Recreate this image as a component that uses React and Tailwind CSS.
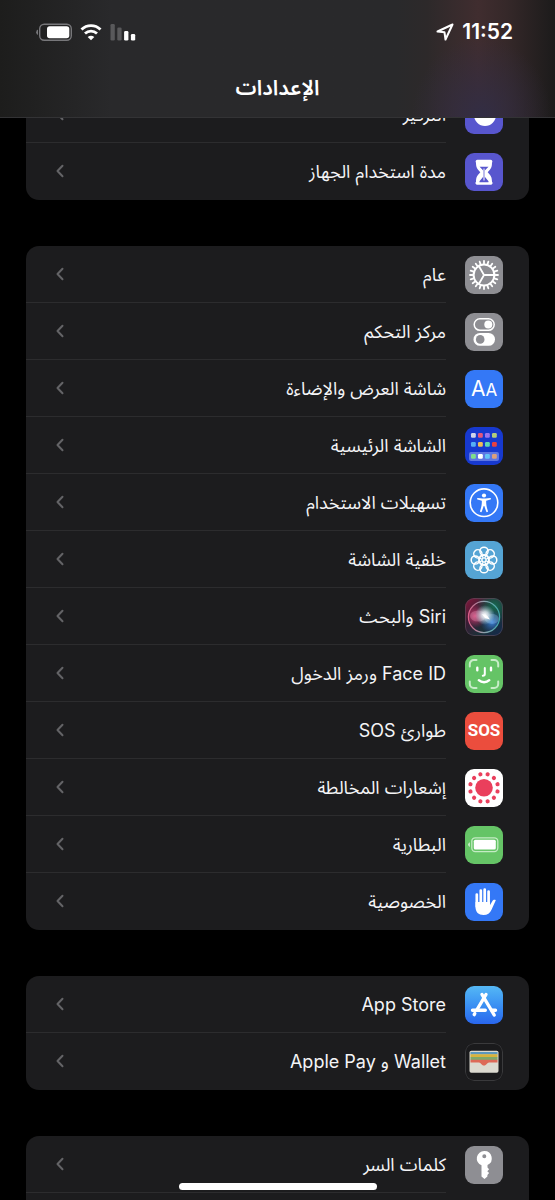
const gearTeeth = Array.from({ length: 20 }, (_, i) => i * 18);
const petals = Array.from({ length: 8 }, (_, i) => i * 45);
const exposureDots = Array.from({ length: 12 }, (_, i) => i * 30 + 15);

const homeDots = [
  { x: 6, y: 6, fill: '#cfd3ea' },
  { x: 13, y: 6, fill: '#e5567c' },
  { x: 20, y: 6, fill: '#9a74ee' },
  { x: 27, y: 6, fill: '#b3cc7c' },
  { x: 6, y: 15, fill: '#54aef5' },
  { x: 13, y: 15, fill: '#f0bb55' },
  { x: 20, y: 15, fill: '#5fd6b4' },
  { x: 27, y: 15, fill: '#e8413f' },
  { x: 6, y: 27, fill: '#7fdf8c' },
  { x: 13, y: 27, fill: '#ffffff' },
  { x: 20, y: 27, fill: '#64c3f5' },
  { x: 27, y: 27, fill: '#dca07c' },
];

function Tile({ className, children }) {
  return (
    <span className={`block size-[38px] shrink-0 overflow-hidden rounded-[9px] ${className}`}>
      <svg viewBox="0 0 38 38" className="size-full" fill="none" aria-hidden="true">
        {children}
      </svg>
    </span>
  );
}

function FocusIcon() {
  return (
    <Tile className="bg-[#5856ce]">
      <circle cx="20" cy="19" r="11" fill="#fff" />
      <circle cx="26" cy="12" r="8" fill="#5856ce" />
    </Tile>
  );
}

function HourglassIcon() {
  return (
    <Tile className="bg-[#5856ce]">
      <path
        d="M12.500 6.800h13a1.800 1.800 0 0 1 1.500 2.900c0 4.600-1.200 6.300-4.300 9.500 3.100 3.200 4.300 5 4.300 9.500a1.800 1.800 0 0 1-1.500 3.100h-13a1.800 1.800 0 0 1-1.500-3.100c0-4.500 1.200-6.300 4.300-9.500-3.100-3.200-4.300-4.900-4.300-9.500a1.800 1.800 0 0 1 1.500-2.900z"
        fill="#fff"
      />
      <path d="M14.600 13.800h8.900l-3.700 3.800v6.200l3.700 4.500v1h-9v-1l3.700-4.500v-6.200z" fill="#5856ce" />
      <path d="M19 15.500v12" stroke="#fff" strokeWidth="1" />
    </Tile>
  );
}

function GearIcon() {
  return (
    <Tile className="bg-[#8e8e93]">
      <g stroke="#fff">
        <circle cx="19" cy="19" r="10.400" strokeWidth="2" />
        {gearTeeth.map((deg) => (
          <path key={deg} d="M30.500 19h2.500" strokeWidth="1.800" strokeLinecap="round" transform={`rotate(${deg} 19 19)`} />
        ))}
        <path d="M19 19h10.500M19 19l-5.300-9.200M19 19l-5.300 9.200" strokeWidth="1.800" />
      </g>
    </Tile>
  );
}

function ControlCenterIcon() {
  return (
    <Tile className="bg-[#8e8e93]">
      <rect x="9.200" y="5.800" width="20" height="11.500" rx="5.750" stroke="#fff" strokeWidth="1.500" />
      <circle cx="23.300" cy="11.600" r="4" fill="#fff" />
      <rect x="8.500" y="20" width="21.500" height="12.800" rx="6.400" fill="#fff" />
      <circle cx="15.200" cy="26.400" r="4.300" fill="#8e8e93" />
    </Tile>
  );
}

function DisplayIcon() {
  return (
    <span
      dir="ltr"
      className="flex size-[38px] shrink-0 items-baseline justify-center rounded-[9px] bg-[#3478f6] leading-[38px] text-white"
    >
      <span className="text-[21px]">A</span>
      <span className="text-[17px]">A</span>
    </span>
  );
}

function HomeScreenIcon() {
  return (
    <Tile className="bg-[#1739cf]">
      <rect x="4" y="25" width="30" height="9" rx="2" fill="#5d76e3" />
      {homeDots.map((dot) => (
        <rect key={`${dot.x}-${dot.y}`} x={dot.x} y={dot.y} width="4.800" height="4.800" rx="1.200" fill={dot.fill} />
      ))}
    </Tile>
  );
}

function AccessibilityIcon() {
  return (
    <Tile className="bg-[#3478f6]">
      <circle cx="19" cy="18.700" r="13.800" stroke="#fff" strokeWidth="1.600" />
      <circle cx="19" cy="11.500" r="2.100" fill="#fff" />
      <path
        d="M12.800 13.900l4.500.7h3.400l4.500-.7a.9.900 0 0 1 .3 1.700l-4.300 1.100c-.2 3.700.5 6.300 1.700 10.200a.9.900 0 0 1-1.700.7l-1.900-5.600h-.6l-1.900 5.600a.9.900 0 0 1-1.700-.7c1.200-3.900 1.900-6.500 1.700-10.200l-4.300-1.100a.9.900 0 0 1 .3-1.700z"
        fill="#fff"
      />
    </Tile>
  );
}

function WallpaperIcon() {
  return (
    <Tile className="bg-[#55a4d4]">
      <g stroke="#fff" strokeWidth="1.500">
        {petals.map((deg) => (
          <circle key={deg} cx="19" cy="10.300" r="4.100" transform={`rotate(${deg} 19 19)`} />
        ))}
        <circle cx="19" cy="19" r="5.300" strokeWidth="1.200" />
        {petals.map((deg) => (
          <path key={deg} d="M19 17v-3.500" strokeWidth="1.200" transform={`rotate(${deg + 22.5} 19 19)`} />
        ))}
        <circle cx="19" cy="19" r="2" strokeWidth="1.200" />
      </g>
    </Tile>
  );
}

function SiriIcon() {
  return (
    <Tile className="bg-[#1c1c2a]">
      <defs>
        <linearGradient id="siriBack" x1="0" y1="0" x2="38" y2="38" gradientUnits="userSpaceOnUse">
          <stop offset="0" stopColor="#8a183c" />
          <stop offset="0.350" stopColor="#3a1c34" />
          <stop offset="0.650" stopColor="#1c3038" />
          <stop offset="1" stopColor="#12284f" />
        </linearGradient>
        <radialGradient id="siriGreen" cx="29" cy="8" r="18" gradientUnits="userSpaceOnUse">
          <stop offset="0" stopColor="#156a50" />
          <stop offset="1" stopColor="#15604c" stopOpacity="0" />
        </radialGradient>
        <radialGradient id="siriPink" cx="10" cy="18" r="12" gradientUnits="userSpaceOnUse">
          <stop offset="0" stopColor="#d24478" />
          <stop offset="1" stopColor="#b0305f" stopOpacity="0" />
        </radialGradient>
        <radialGradient id="siriBlue" cx="27" cy="24" r="12" gradientUnits="userSpaceOnUse">
          <stop offset="0" stopColor="#3c86dc" />
          <stop offset="1" stopColor="#2554a0" stopOpacity="0" />
        </radialGradient>
        <radialGradient id="siriGlow" cx="20" cy="17" r="10" gradientUnits="userSpaceOnUse">
          <stop offset="0" stopColor="#fff" />
          <stop offset="0.350" stopColor="#e4f0f6" stopOpacity="0.800" />
          <stop offset="1" stopColor="#9fd8e0" stopOpacity="0" />
        </radialGradient>
        <linearGradient id="siriRing" x1="3" y1="19" x2="35" y2="19" gradientUnits="userSpaceOnUse">
          <stop offset="0" stopColor="#dc5c86" />
          <stop offset="0.500" stopColor="#8fa2ad" />
          <stop offset="1" stopColor="#3ca8a8" />
        </linearGradient>
      </defs>
      <rect width="38" height="38" fill="url(#siriBack)" />
      <rect width="38" height="38" fill="url(#siriGreen)" />
      <circle cx="19" cy="19" r="16" fill="url(#siriPink)" />
      <circle cx="19" cy="19" r="16" fill="url(#siriBlue)" />
      <ellipse cx="13" cy="18" rx="8" ry="5.500" fill="#f0a8c8" opacity="0.300" />
      <ellipse cx="27" cy="21" rx="7" ry="5" fill="#9ecbf2" opacity="0.300" />
      <circle cx="20" cy="17" r="10" fill="url(#siriGlow)" />
      <path d="M17 16l5 1.500 3 4-5-1.500z" fill="#fff" />
      <circle cx="19" cy="19" r="15.600" stroke="url(#siriRing)" strokeWidth="1.200" />
      <rect x="0.500" y="0.500" width="37" height="37" rx="8.500" stroke="#5c4a58" strokeOpacity="0.700" />
    </Tile>
  );
}

function FaceIdIcon() {
  return (
    <Tile className="bg-[#65c466]">
      <g stroke="#c9edc9" strokeWidth="2" strokeLinecap="round">
        <path d="M4.800 11.500V9a4 4 0 0 1 4-4h2.700M26.500 5h2.700a4 4 0 0 1 4 4v2.500M33.200 26.500V29a4 4 0 0 1-4 4h-2.700M11.500 33H8.800a4 4 0 0 1-4-4v-2.500" />
      </g>
      <g stroke="#fff" strokeWidth="2.400" strokeLinecap="round">
        <path d="M12.300 12.700v2.600M26 12.700v2.600" />
        <path d="M19.800 13v6c0 1.200-.6 1.800-2 1.800" strokeWidth="2" />
        <path d="M13.800 25.200c3 2.800 7.500 2.800 10.500 0" />
      </g>
    </Tile>
  );
}

function SosIcon() {
  return (
    <span className="flex size-[38px] shrink-0 items-center justify-center rounded-[9px] bg-[#eb4d3d] font-['Liberation_Sans_Narrow','Roboto',sans-serif] text-[17px] font-bold leading-none text-white">
      SOS
    </span>
  );
}

function ExposureIcon() {
  return (
    <Tile className="bg-white">
      <circle cx="19" cy="18.800" r="8.800" fill="#ea3f5c" />
      {exposureDots.map((deg) => (
        <circle key={deg} cx="19" cy="4.800" r="2.100" fill="#ea3f5c" transform={`rotate(${deg} 19 18.800)`} />
      ))}
    </Tile>
  );
}

function BatteryIcon() {
  return (
    <Tile className="bg-[#65c466]">
      <rect x="6.800" y="11.800" width="26" height="13.800" rx="3.500" stroke="#c4ebc4" strokeWidth="1.300" />
      <rect x="8.800" y="13.800" width="22" height="9.800" rx="1.500" fill="#fff" />
      <path d="M4.800 16.200v4.800a2.600 2.600 0 0 1 0-4.800z" fill="#d8f2d8" />
    </Tile>
  );
}

function HandIcon() {
  return (
    <Tile className="bg-[#3478f6]">
      <g stroke="#fff" strokeWidth="2.700" strokeLinecap="round">
        <path d="M11.800 11.500v12M15.800 7.500v13M19.700 6.500v13M23.600 8.500v13" />
      </g>
      <path
        d="M10.500 19h14.400v3.200l2.400-4c.9-1.500 2.500-1.600 3.500-1l-4.300 9.600c-1.500 3.500-4 5.200-8 5.200-5 0-8-3-8-8z"
        fill="#fff"
      />
    </Tile>
  );
}

function AppStoreIcon() {
  return (
    <Tile className="bg-linear-to-b from-[#55b8f5] to-[#2a66ee]">
      <g stroke="#fff" strokeWidth="3.400" strokeLinecap="round">
        <path d="M17 8.500l12.200 20.500" />
        <path d="M21 8.500L11.800 24" />
        <path d="M9.800 27.500l-.6 1.100" />
        <path d="M7.500 24.200h12.800M26.800 24.200h3.700" />
      </g>
    </Tile>
  );
}

function WalletIcon() {
  return (
    <Tile className="bg-[#1a1a1c]">
      <rect x="0.500" y="0.500" width="37" height="37" rx="8.500" stroke="#3a3a3c" />
      <rect x="4.500" y="7.800" width="29" height="22" rx="1.800" fill="#dcdad0" />
      <path d="M5.500 9h27v2.500h-27z" fill="#5b97bd" />
      <path d="M5.500 11.200h27v3h-27z" fill="#d8b33c" />
      <path d="M5.500 14h27v3h-27z" fill="#7fa869" />
      <path d="M5.500 16.800h27v2.700H24c-2 .2-2.300 3-5 3s-3-2.800-5-3H5.500z" fill="#dd6a58" />
    </Tile>
  );
}

function KeyIcon() {
  return (
    <Tile className="bg-[#8e8e93]">
      <path
        fillRule="evenodd"
        d="M19.300 5a7.400 7.400 0 0 1 3.200 14.100v2.400l1.600 1.800-1.800 1.900 1.800 1.900-1.700 1.800v1.600L19.500 33l-3-2.500V19.300A7.400 7.400 0 0 1 19.300 5zm0 3.200a2 2 0 1 0 0 4 2 2 0 0 0 0-4z"
        fill="#fff"
      />
    </Tile>
  );
}

const sections = [
  [
    { label: 'التركيز', Icon: FocusIcon },
    { label: 'مدة استخدام الجهاز', Icon: HourglassIcon },
  ],
  [
    { label: 'عام', Icon: GearIcon },
    { label: 'مركز التحكم', Icon: ControlCenterIcon },
    { label: 'شاشة العرض والإضاءة', Icon: DisplayIcon },
    { label: 'الشاشة الرئيسية', Icon: HomeScreenIcon },
    { label: 'تسهيلات الاستخدام', Icon: AccessibilityIcon },
    { label: 'خلفية الشاشة', Icon: WallpaperIcon },
    { label: 'Siri والبحث', Icon: SiriIcon },
    { label: 'Face ID ورمز الدخول', Icon: FaceIdIcon },
    { label: 'طوارئ SOS', Icon: SosIcon },
    { label: 'إشعارات المخالطة', Icon: ExposureIcon },
    { label: 'البطارية', Icon: BatteryIcon },
    { label: 'الخصوصية', Icon: HandIcon },
  ],
  [
    { label: 'App Store', Icon: AppStoreIcon },
    { label: 'Wallet و Apple Pay', Icon: WalletIcon },
  ],
];

function Row({ label, Icon, divider }) {
  return (
    <a href="#" className="flex h-[57px] items-center gap-[19px] ps-[26px]">
      <Icon />
      <span
        className={`flex h-full flex-1 items-center justify-between border-b pe-[30px] ${
          divider ? 'border-[#2c2c2e]' : 'border-transparent'
        }`}
      >
        <span className="pt-[2px] text-[18px] leading-6 text-[#f4f4f6]">{label}</span>
        <svg viewBox="0 0 8 14" className="h-[14px] w-2" fill="none" aria-hidden="true">
          <path d="M6.500 1.700L1.500 7l5 5.300" stroke="#636366" strokeWidth="2" strokeLinecap="round" strokeLinejoin="round" />
        </svg>
      </span>
    </a>
  );
}

function StatusBar() {
  return (
    <div className="flex items-center justify-between ps-[42px] pe-9 pt-[18px]">
      <div className="flex items-center gap-2">
        <span className="text-[21px] font-semibold leading-7">11:52</span>
        <svg viewBox="0 0 18 18" className="size-[18px]" fill="none" aria-hidden="true">
          <path d="M16.500 1.500L1.500 8.500l7 .8 1 7.200z" stroke="#fff" strokeWidth="2" strokeLinejoin="round" />
        </svg>
      </div>
      <div className="flex items-center gap-2">
        <svg viewBox="0 0 26 18" className="h-[18px] w-[26px]" aria-hidden="true">
          <rect x="0.500" y="1" width="4.300" height="16.500" rx="1.300" fill="#59595b" />
          <rect x="7.300" y="4.500" width="4.300" height="13" rx="1.300" fill="#59595b" />
          <rect x="14.100" y="8" width="4.300" height="9.500" rx="1.300" fill="#fff" />
          <rect x="20.900" y="11" width="4.300" height="6.500" rx="1.300" fill="#fff" />
        </svg>
        <svg viewBox="0 0 22 18" className="h-[18px] w-[22px]" fill="none" aria-hidden="true">
          <path d="M1.500 6.500c5.400-5.200 13.600-5.200 19 0" stroke="#fff" strokeWidth="2.900" />
          <path d="M5 10.500c3.500-3.300 8.500-3.300 12 0" stroke="#fff" strokeWidth="2.800" />
          <path d="M11 17.300l-3.300-3.400c2-1.700 4.600-1.700 6.600 0z" fill="#fff" />
        </svg>
        <svg viewBox="0 0 36 18" className="h-[18px] w-9" fill="none" aria-hidden="true">
          <rect x="3.700" y="1.200" width="31.600" height="16" rx="4.500" stroke="#77777a" strokeWidth="1.400" />
          <rect x="11" y="3.200" width="22.300" height="12" rx="2.700" fill="#fff" />
          <path d="M2 6.500v5.500a3 3 0 0 1 0-5.500z" fill="#77777a" />
        </svg>
      </div>
    </div>
  );
}

export default function App() {
  return (
    <div
      dir="rtl"
      lang="ar"
      className="relative flex h-screen flex-col overflow-hidden bg-black font-['Inter','Noto_Sans_Arabic','Noto_Sans','DejaVu_Sans',sans-serif] text-white"
    >
      <header className="absolute inset-x-0 top-0 z-10 h-[118px] border-b border-[#333335] bg-linear-to-r from-[#1d1d1c] via-[#29292b] via-20% to-[#29292b]">
        {/* colours of the list showing through the bar */}
        <div className="absolute inset-y-0 right-0 w-40 bg-[linear-gradient(to_right,#29292b,#2d292a_20%,#402d2f_52%,#352829_70%,#1c1b1b)]" />
        <div className="absolute bottom-0 right-0 h-20 w-40 bg-[radial-gradient(70px_80px_at_54%_100%,#322d44,transparent)]" />
        <div className="relative">
          <StatusBar />
          <h1 className="mt-7 text-center text-[21px] font-semibold leading-7">الإعدادات</h1>
        </div>
      </header>

      <main className="flex flex-1 flex-col gap-[46px] px-[26px] pt-[86px]">
        {sections.map((rows, i) => (
          <section key={i} className="shrink-0 overflow-hidden rounded-[13px] bg-[#1c1c1e]">
            {rows.map((row, j) => (
              <Row key={row.label} {...row} divider={j < rows.length - 1} />
            ))}
          </section>
        ))}
        <section className="flex-1 rounded-t-[13px] bg-[#1c1c1e]">
          <Row label="كلمات السر" Icon={KeyIcon} divider />
        </section>
      </main>

      {/* Home indicator */}
      <div className="absolute inset-x-0 bottom-[10px] z-10 mx-auto h-[7px] w-[198px] rounded-full bg-white" />
    </div>
  );
}
